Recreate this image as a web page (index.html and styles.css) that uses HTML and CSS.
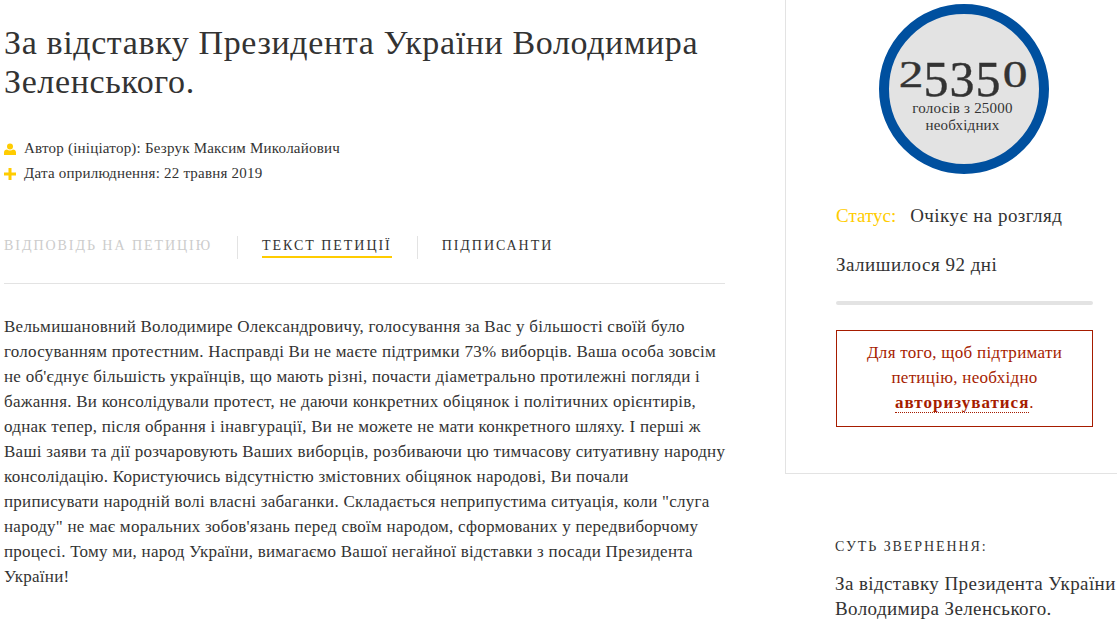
FILE: index.html
```html
<!DOCTYPE html>
<html lang="uk">
<head>
  <meta charset="UTF-8">
  <title>За відставку Президента України Володимира Зеленського.</title>
  <link rel="stylesheet" href="styles.css">
</head>
<body>
  <div class="page">
    <main class="petition">
      <h1>За відставку Президента України Володимира<br>Зеленського.</h1>
      <div class="meta">
        <div class="meta-row">
          <svg class="meta-icon" viewBox="0 0 12 12"><circle cx="6" cy="3.4" r="3"/><path d="M0 12V9.6C0 7.8 1.4 6.6 3 6.6c.8.6 1.9 1 3 1s2.200-.4 3-1c1.600 0 3 1.200 3 3V12z"/></svg>
          <span>Автор (ініціатор): Безрук Максим Миколайович</span>
        </div>
        <div class="meta-row">
          <svg class="meta-icon" viewBox="0 0 12 12"><path d="M4.500 0h3v4.500H12v3H7.500V12h-3V7.500H0v-3h4.500z"/></svg>
          <span>Дата оприлюднення: 22 травня 2019</span>
        </div>
      </div>
      <nav class="tabs">
        <a class="tab tab-off">ВІДПОВІДЬ НА ПЕТИЦІЮ</a>
        <a class="tab tab-on">ТЕКСТ ПЕТИЦІЇ</a>
        <a class="tab">ПІДПИСАНТИ</a>
      </nav>
      <p class="text">Вельмишановний Володимире Олександровичу, голосування за Вас у більшості своїй було<br>
голосуванням протестним. Насправді Ви не маєте підтримки 73% виборців. Ваша особа зовсім<br>
не об'єднує більшість українців, що мають різні, почасти діаметрально протилежні погляди і<br>
бажання. Ви консолідували протест, не даючи конкретних обіцянок і політичних орієнтирів,<br>
однак тепер, після обрання і інавгурації, Ви не можете не мати конкретного шляху. І перші ж<br>
Ваші заяви та дії розчаровують Ваших виборців, розбиваючи цю тимчасову ситуативну народну<br>
консолідацію. Користуючись відсутністю змістовних обіцянок народові, Ви почали<br>
приписувати народній волі власні забаганки. Складається неприпустима ситуація, коли "слуга<br>
народу" не має моральних зобов'язань перед своїм народом, сформованих у передвиборчому<br>
процесі. Тому ми, народ України, вимагаємо Вашої негайної відставки з посади Президента<br>
України!</p>
    </main>
    <aside class="side">
      <section class="card">
        <div class="counter">
          <div class="count"><span class="low">2</span><span class="drop">535</span><span class="low">0</span></div>
          <div class="count-note">голосів з 25000<br>необхідних</div>
        </div>
        <div class="status"><span class="status-label">Статус:</span><span class="status-value">Очікує на розгляд</span></div>
        <div class="left">Залишилося 92 дні</div>
        <div class="progress"></div>
        <div class="auth">Для того, щоб підтримати<br>петицію, необхідно<br><a class="auth-link">авторизуватися</a>.</div>
      </section>
      <section class="gist">
        <h3>СУТЬ ЗВЕРНЕННЯ:</h3>
        <p>За відставку Президента України<br>Володимира Зеленського.</p>
      </section>
    </aside>
  </div>
</body>
</html>
```

FILE: styles.css
```css
* {
  box-sizing: border-box;
}
html, body {
  height: 100%;
  overflow: hidden;
}
body {
  margin: 0;
  background: #fff;
  color: #333;
  font-family: "Liberation Serif", "DejaVu Serif", serif;
}
.page {
  display: flex;
  align-items: flex-start;
  padding-left: 4px;
}
.petition {
  width: 721px;
  margin-right: 60px;
  flex-shrink: 0;
}
h1 {
  margin: 0;
  padding-top: 23px;
  font-size: 34px;
  font-weight: normal;
  line-height: 39px;
  letter-spacing: 0.62px;
  white-space: nowrap;
}
.meta {
  margin-top: 35px;
}
.meta-row {
  display: flex;
  align-items: center;
  gap: 8px;
  height: 25px;
  font-size: 15px;
  letter-spacing: 0.22px;
}
.meta-icon {
  width: 12px;
  height: 12px;
  fill: #fc0;
}
.tabs {
  display: flex;
  align-items: flex-start;
  margin-top: 50px;
  padding-bottom: 24px;
  border-bottom: 1px solid #e3e3e3;
}
.tab {
  padding-right: 25px;
  margin-right: 24px;
  height: 23px;
  border-right: 1px solid #e3e3e3;
  font-size: 14px;
  line-height: 20px;
  letter-spacing: 1.95px;
}
.tab:last-child {
  border-right: none;
}
.tab-off {
  color: #ccc;
}
.tab-on {
  position: relative;
}
.tab-on::after {
  content: "";
  position: absolute;
  left: 0;
  right: 25px;
  top: 20px;
  height: 2px;
  background: #fc0;
}
.text {
  margin: 30px 0 0;
  font-size: 17px;
  line-height: 25px;
  letter-spacing: 0.25px;
  white-space: nowrap;
}
.side {
  width: 332px;
  flex-shrink: 0;
}
.card {
  height: 474px;
  padding: 4px 24px 0 50px;
  border-left: 1px solid #e3e3e3;
  border-bottom: 1px solid #e3e3e3;
}
.counter {
  width: 170px;
  height: 170px;
  margin-left: 43px;
  padding: 31px 3px 0 0;
  border: 10px solid #00509f;
  border-radius: 50%;
  background: #e3e3e3;
  text-align: center;
}
.count {
  height: 54px;
  font-size: 50px;
  line-height: 50px;
  white-space: nowrap;
  -webkit-text-stroke: 0.4px #333;
}
.low {
  display: inline-block;
  font-size: 38px;
  width: 26px;
  transform: scaleX(1.3);
}
.drop {
  position: relative;
  top: 9px;
  letter-spacing: 1px;
}
.count-note {
  margin-top: 1px;
  font-size: 15px;
  line-height: 17px;
  letter-spacing: 0.2px;
}
.status {
  display: flex;
  gap: 14px;
  margin-top: 29px;
  font-size: 19px;
  line-height: 26px;
}
.status-value {
  letter-spacing: 0.45px;
}
.status-label {
  color: #fc0;
}
.left {
  margin-top: 23px;
  font-size: 19px;
  line-height: 26px;
  letter-spacing: 0.5px;
}
.progress {
  height: 4px;
  margin-top: 23px;
  border-radius: 2px;
  background: #e3e3e3;
}
.auth {
  height: 97px;
  margin-top: 25px;
  padding-top: 9px;
  border: 1px solid #a61c00;
  color: #a61c00;
  font-size: 17px;
  line-height: 25px;
  letter-spacing: 0.3px;
  text-align: center;
}
.auth-link {
  font-weight: bold;
  letter-spacing: 1px;
  border-bottom: 1px dotted #a61c00;
}
.gist {
  padding-left: 50px;
}
.gist h3 {
  margin: 64px 0 0;
  font-size: 14px;
  font-weight: normal;
  line-height: 18px;
  letter-spacing: 1.9px;
}
.gist p {
  margin: 15px 0 0;
  font-size: 19px;
  line-height: 25px;
  letter-spacing: 0.4px;
  white-space: nowrap;
}
```
